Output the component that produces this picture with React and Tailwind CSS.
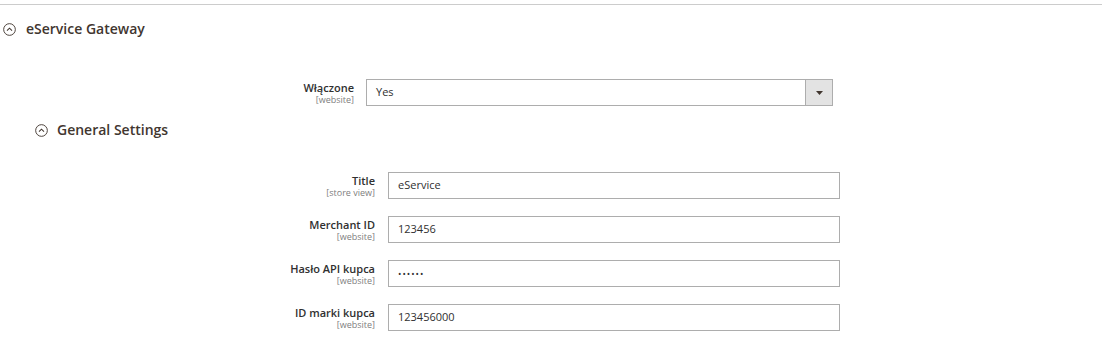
import React from 'react';

function Collapse({ size = 12 }) {
  return (
    <svg width={size} height={size} viewBox="0 0 14 14" className="shrink-0">
      <circle cx="7" cy="7" r="6.3" fill="none" stroke="#41362f" strokeWidth="1" />
      <path d="M4.3 8.3 L7 5.6 L9.7 8.3" fill="none" stroke="#41362f" strokeWidth="1.1" />
    </svg>
  );
}

function Label({ title, scope, width }) {
  return (
    <div className="text-right pt-[2px]" style={{ width }}>
      <div className="text-[11px] font-semibold text-[#303030] leading-[13px]">{title}</div>
      <div className="text-[9px] text-[#808080] leading-[11px]">[{scope}]</div>
    </div>
  );
}

function Field({ title, scope, value }) {
  return (
    <div className="flex items-start">
      <Label title={title} scope={scope} width="375px" />
      <div className="ml-[13px] w-[452px] h-[27px] border border-[#adadad] bg-white flex items-center px-[9px] text-[11px] text-[#303030]">
        {value}
      </div>
    </div>
  );
}

export default function App() {
  return (
    <div className="w-[1106px] h-[344px] bg-white overflow-hidden font-['Open_Sans',sans-serif] text-[#303030]">
      <div className="pt-[4px] pr-[4px]">
        <div className="h-px bg-[#cccccc]" />
      </div>

      {/* Section header */}
      <div className="flex items-center gap-[10px] pl-[3px] mt-[17px] h-[14px]">
        <Collapse size={13} />
        <span className="text-[14px] font-semibold text-[#41362f] leading-none">eService Gateway</span>
      </div>

      {/* Enabled */}
      <div className="flex items-start mt-[43px]">
        <Label title="Włączone" scope="website" width="354px" />
        <div className="ml-[12px] w-[467px] h-[27px] border border-[#adadad] bg-white flex">
          <div className="flex-1 flex items-center px-[9px] text-[11px]">Yes</div>
          <div className="w-[27px] bg-[#e3e3e3] border-l border-[#adadad] flex items-center justify-center">
            <svg width="7" height="4" viewBox="0 0 7 4">
              <path d="M0 0 H7 L3.5 4 Z" fill="#41362f" />
            </svg>
          </div>
        </div>
      </div>

      {/* General Settings */}
      <div className="flex items-center gap-[9px] pl-[35px] mt-[17px] h-[14px]">
        <Collapse size={13} />
        <span className="text-[14px] font-semibold text-[#41362f] leading-none">General Settings</span>
      </div>

      <div className="flex flex-col gap-[17px] mt-[35px]">
        <Field title="Title" scope="store view" value="eService" />
        <Field title="Merchant ID" scope="website" value="123456" />
        <Field title="Hasło API kupca" scope="website" value={<span className="tracking-[1px] text-[9px]">••••••</span>} />
        <Field title="ID marki kupca" scope="website" value="123456000" />
      </div>
    </div>
  );
}
